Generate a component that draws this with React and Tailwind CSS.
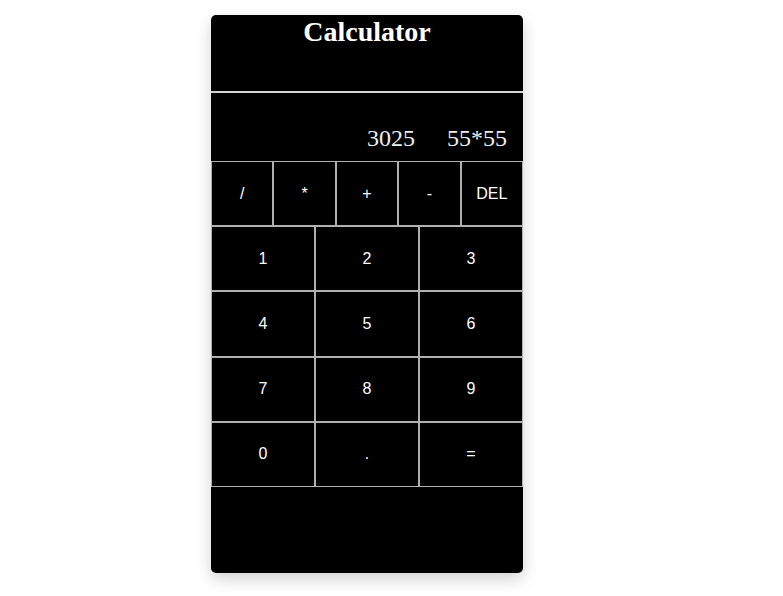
export default function App() {
  const ops = ["/", "*", "+", "-", "DEL"];
  const nums = ["1", "2", "3", "4", "5", "6", "7", "8", "9", "0", ".", "="];
  return (
    <div className="min-h-[596px] w-full bg-white pt-[15px] pl-[211px]">
      <div className="w-[312px] h-[558px] bg-black rounded-[5px] shadow-[0_6px_16px_rgba(0,0,0,0.18)] overflow-hidden flex flex-col">
        <div className="h-[78px] shrink-0 border-b-2 border-[#d4d4d4] pt-[3px]">
          <h1 className="text-center text-white font-bold text-[28px] leading-none" style={{ fontFamily: '"Liberation Serif", "Times New Roman", serif' }}>
            Calculator
          </h1>
        </div>
        <div
          className="h-[68px] shrink-0 flex items-end justify-end gap-[32px] pr-[16px] pb-[11px] text-[24px] leading-none text-[#eeeeee]"
          style={{ fontFamily: '"Liberation Serif", "Times New Roman", serif' }}
        >
          <span>3025</span>
          <span>55*55</span>
        </div>
        <div className="grid grid-cols-5 h-[65px] shrink-0" style={{ fontFamily: '"Liberation Sans", Arial, sans-serif' }}>
          {ops.map((o) => (
            <button key={o} className="border border-[#b0b0b0] bg-black text-white text-[16px] flex items-center justify-center">
              {o}
            </button>
          ))}
        </div>
        <div className="grid grid-cols-3 grid-rows-4 h-[261px] shrink-0" style={{ fontFamily: '"Liberation Sans", Arial, sans-serif' }}>
          {nums.map((n) => (
            <button key={n} className="border border-[#b0b0b0] bg-black text-white text-[16px] flex items-center justify-center">
              {n}
            </button>
          ))}
        </div>
      </div>
    </div>
  );
}
